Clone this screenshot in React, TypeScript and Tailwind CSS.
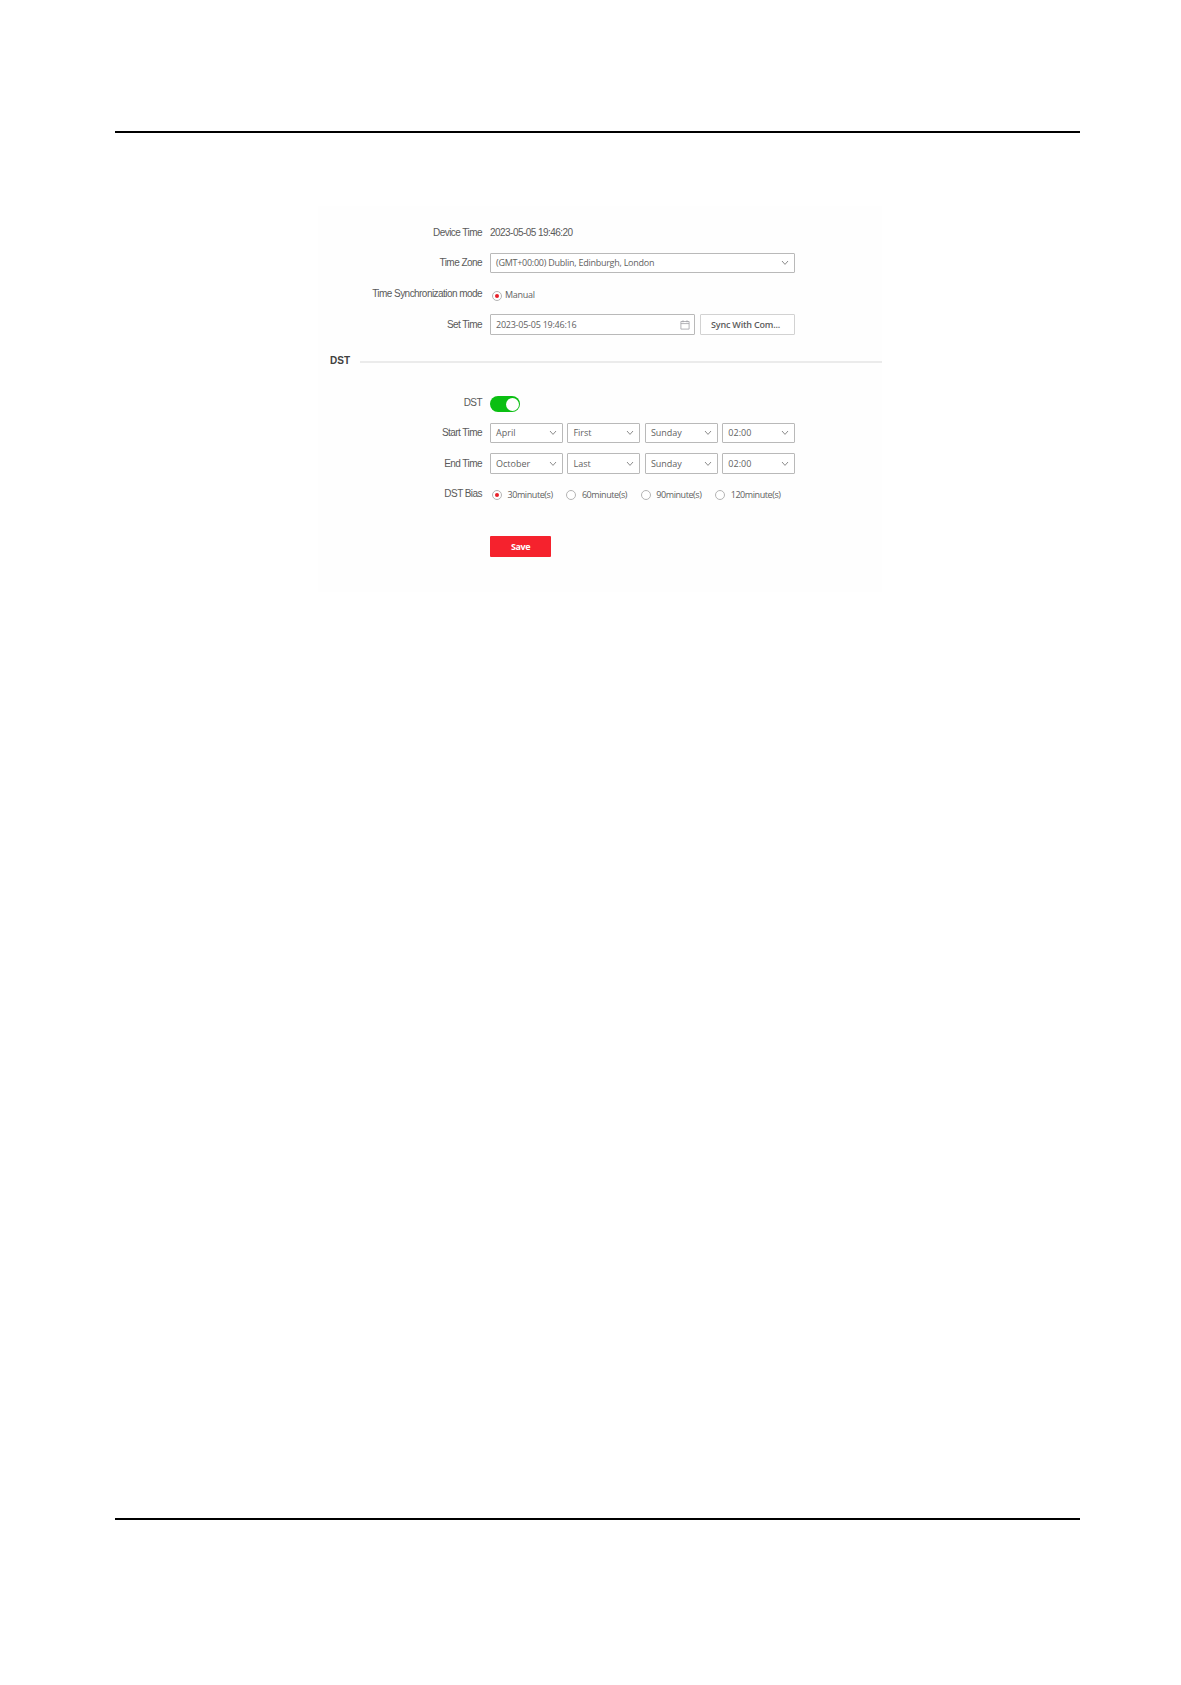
import type { ReactNode } from "react";
import clsx from "clsx";

const startTime = ["April", "First", "Sunday", "02:00"];
const endTime = ["October", "Last", "Sunday", "02:00"];
const biasOptions = ["30minute(s)", "60minute(s)", "90minute(s)", "120minute(s)"];

const Chevron = () => (
  <svg
    viewBox="0 0 8 6"
    className="h-[6px] w-[8px] shrink-0"
    fill="none"
    stroke="#8c8c8c"
    strokeWidth="1"
  >
    <path d="M1 1l3 3.4L7 1" />
  </svg>
);

const CalendarIcon = () => (
  <svg
    viewBox="0 0 10 10"
    className="h-[10px] w-[10px] shrink-0"
    fill="none"
    stroke="#a0a0a6"
    strokeWidth="0.8"
  >
    <path d="M0.9 1.5h8.2v7.6H0.9zM0.9 3.6h8.2M3 0.3v2M7 0.3v2" />
  </svg>
);

const Row = ({
  label,
  className,
  labelClass,
  children,
}: {
  label?: string;
  className: string;
  labelClass?: string;
  children: ReactNode;
}) => (
  <div className={clsx("flex items-center", className)}>
    <span
      className={clsx(
        "mr-[8px] w-[164px] shrink-0 text-right font-['Liberation_Sans',sans-serif] text-[10px] tracking-[-0.55px] whitespace-nowrap text-[#5a5a5a]",
        labelClass
      )}
    >
      {label}
    </span>
    {children}
  </div>
);

const Select = ({ value, className }: { value: string; className?: string }) => (
  <div
    className={clsx(
      "flex h-full items-center justify-between rounded-[1px] border border-[#b9b9b9] bg-white pr-[5px] pl-[5px]",
      className
    )}
  >
    <span>{value}</span>
    <Chevron />
  </div>
);

const Radio = ({ checked }: { checked?: boolean }) => (
  <span className="flex h-[10px] w-[10px] shrink-0 items-center justify-center rounded-full border border-[#b4b4b4] bg-white">
    {checked && <span className="h-[4px] w-[4px] rounded-full bg-[#e8202a]" />}
  </span>
);

const TimeSelects = ({ values }: { values: string[] }) => (
  <div className="grid h-full w-[305px] grid-cols-4 gap-[4.8px]">
    {values.map((value, i) => (
      <Select key={i} value={value} />
    ))}
  </div>
);

export default function App() {
  return (
    <div className="flex h-[1685px] w-[1181px] flex-col bg-white">
      <div className="mt-[131px] ml-[115px] h-[2px] w-[965px] bg-black" />

      <div className="mt-[73px] ml-[318px] h-[386px] w-[564px] bg-[#fefefe] pt-[17px] font-['Open_Sans',sans-serif] text-[9px] leading-[12px] whitespace-nowrap text-[#626262]">
        <Row label="Device Time" className="h-[20px]">
          <span className="font-['Liberation_Sans',sans-serif] text-[10px] tracking-[-0.54px] text-[#5a5a5a]">
            2023-05-05 19:46:20
          </span>
        </Row>
        <Row label="Time Zone" className="mt-[10px] h-[20px]">
          <Select
            value="(GMT+00:00) Dublin, Edinburgh, London"
            className="w-[305px] tracking-[-0.26px]"
          />
        </Row>
        <Row label="Time Synchronization mode" className="mt-[11px] h-[20px]">
          <div className="mt-[3px] ml-[2px] flex items-center gap-[3px]">
            <Radio checked />
            <span className="-mt-[2px] tracking-[-0.3px]">Manual</span>
          </div>
        </Row>
        <Row label="Set Time" className="mt-[10px] h-[21px]">
          <div className="flex h-full w-[205px] items-center justify-between rounded-[1px] border border-[#b9b9b9] bg-white pr-[4px] pl-[5px]">
            <span className="tracking-[-0.24px]">2023-05-05 19:46:16</span>
            <CalendarIcon />
          </div>
          <button className="ml-[5px] h-full w-[95px] rounded-[1px] border border-[#d2d2d2] bg-white pr-[4px] text-center font-semibold tracking-[-0.2px] text-[#5c5c5c]">
            Sync With Com...
          </button>
        </Row>

        <div className="mt-[18px] flex h-[16px] items-center pl-[12px]">
          <span className="w-[30px] font-['Liberation_Sans',sans-serif] text-[10px] font-bold text-[#404040]">
            DST
          </span>
          <span className="mt-[2px] h-[2px] flex-1 bg-[#ebebeb]" />
        </div>

        <Row label="DST" className="mt-[26px] h-[18px]" labelClass="-mt-[2px]">
          <span className="flex h-[16px] w-[30px] items-center justify-end rounded-full bg-[#0abf12] pr-px">
            <span className="h-[13px] w-[13px] rounded-full bg-white" />
          </span>
        </Row>
        <Row label="Start Time" className="mt-[10px] h-[20px]">
          <TimeSelects values={startTime} />
        </Row>
        <Row label="End Time" className="mt-[10px] h-[21px]">
          <TimeSelects values={endTime} />
        </Row>
        <Row label="DST Bias" className="mt-[10px] h-[20px]">
          <div className="mt-[2px] ml-[2px] flex items-center">
            {biasOptions.map((option, i) => (
              <span key={option} className="flex w-[74.4px] items-center gap-[5.5px]">
                <Radio checked={i === 0} />
                <span className="tracking-[-0.42px]">{option}</span>
              </span>
            ))}
          </div>
        </Row>
        <Row className="mt-[32px] h-[21px]">
          <button className="h-full w-[61px] rounded-[1px] bg-[#f5222d] text-center font-bold tracking-[-0.4px] text-white">
            Save
          </button>
        </Row>
      </div>

      <div className="mt-[926px] ml-[115px] h-[2px] w-[965px] bg-black" />
    </div>
  );
}
